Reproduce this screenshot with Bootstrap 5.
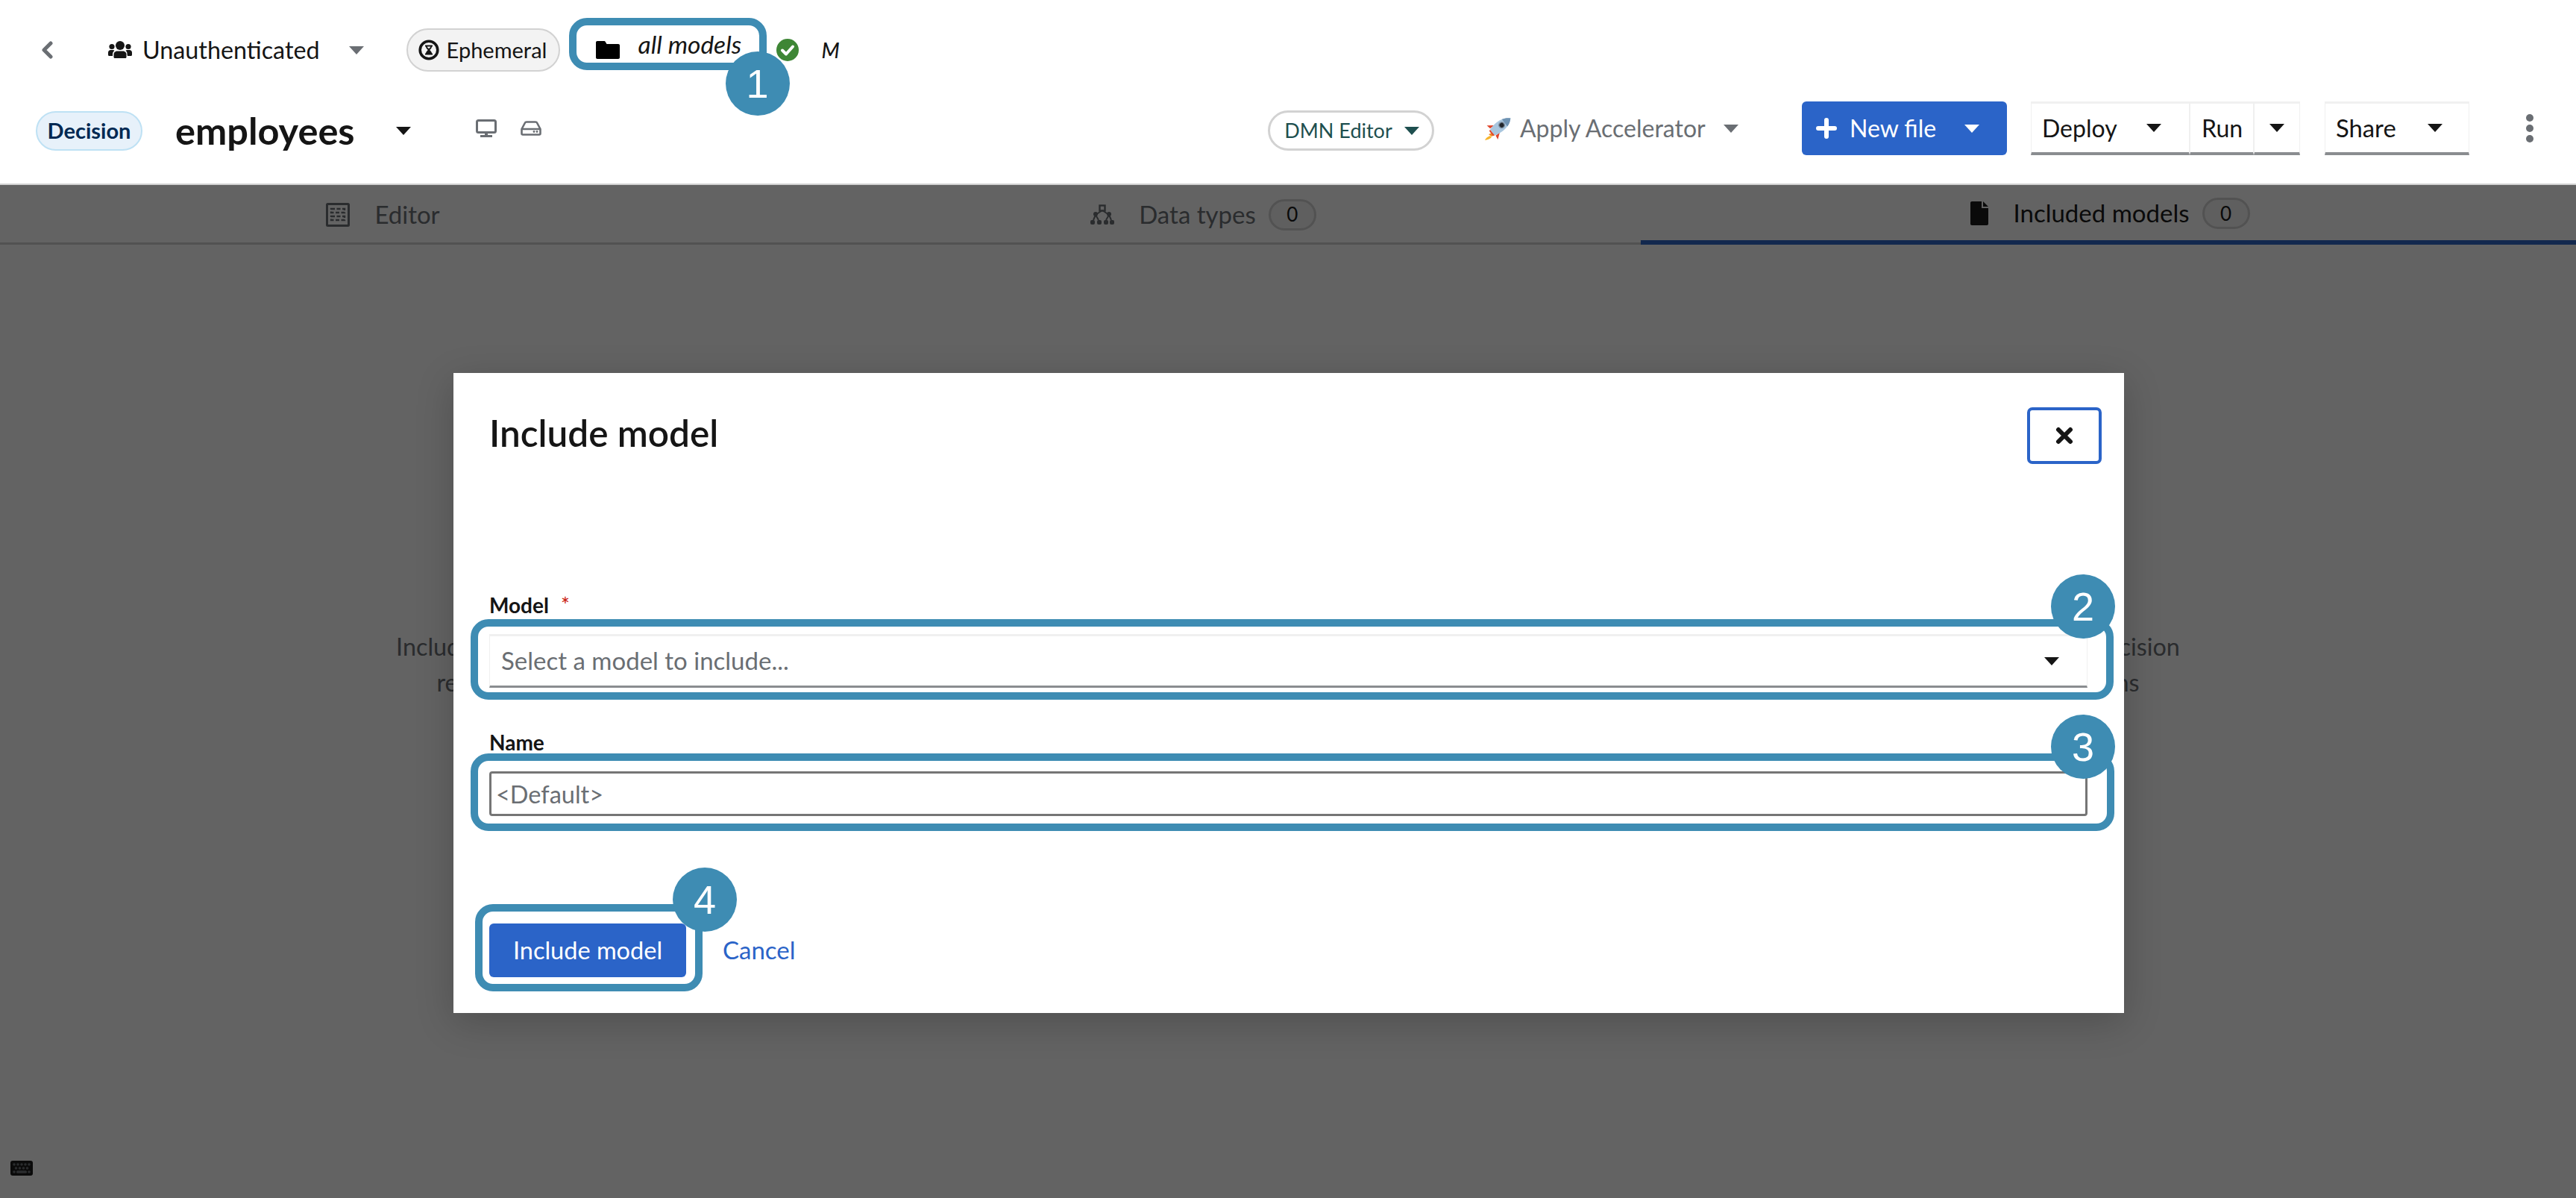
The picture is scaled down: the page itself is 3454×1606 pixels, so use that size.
<!DOCTYPE html>
<html lang="en">
<head>
<meta charset="UTF-8">
<title>employees - Include model</title>
<link href="https://cdn.jsdelivr.net/npm/bootstrap@5.3.0/dist/css/bootstrap.min.css" rel="stylesheet">
<style>
html, body { height: 100%; }
body { font-family: Lato, "Liberation Sans", sans-serif; font-size: 32px; color: #151515; background: #fff; overflow: hidden; }
.page { height: 1606px; }
.head-bar { height: 248px; padding-top: 25px; border-bottom: 2px solid #d2d2d2; }
.row-one { height: 84px; padding-left: 55px; }
.row-two { height: 72px; margin-top: 27px; padding-left: 48px; padding-right: 56px; }
.tri { display: inline-block; width: 0; height: 0; border-left: 10px solid transparent; border-right: 10px solid transparent; border-top: 11px solid currentColor; flex: none; }
.tri-gray { color: #6a6e73; }
.back-arrow { margin-right: 73px; }
.user-name { margin-left: 14px; font-size: 32.3px; }
.user-caret { margin-left: 39px; }
.ephemeral-pill { margin-left: 57px; width: 206px; height: 58px; background: #f3f3f3; border: 2px solid #d2d2d2; font-size: 29px; padding-left: 14px; gap: 10px; }
.models-box { margin-left: 12px; width: 265px; height: 70px; margin-top: -16px; padding-left: 36px; }
.models-folder { margin-top: 16px; flex-shrink: 0; }
.models-name { margin-left: 25px; font-size: 33.500px; font-style: italic; margin-top: 0; white-space: nowrap; }
.saved-check { margin-left: 13px; }
.mod-flag { margin-left: 31px; font-size: 28px; font-style: italic; font-weight: 500; }
.callout-ring { position: absolute; border: 10px solid #3e8cb3; border-radius: 24px; pointer-events: none; }
.step-dot { position: absolute; width: 86px; height: 86px; border-radius: 50%; background: #3e8cb3; color: #fff; font-family: "Liberation Sans", sans-serif; font-size: 54px; line-height: 86px; text-align: center; z-index: 2; }
.ring-one { inset: 0; }
.dot-one { right: -31px; top: 45px; }
.kind-pill { width: 143px; height: 53px; margin-top: 6px; background: #e7f1fa; border: 2px solid #bee1f4; color: #002952; font-size: 29px; font-weight: 700; }
.file-name { margin-left: 44px; margin-top: 6px; font-size: 50.500px; font-weight: 700; line-height: 1; }
.file-caret { margin-left: 55px; margin-top: 6px; color: #151515; }
.screen-icon { margin-left: 87px; }
.drive-icon { margin-left: 32px; }
.editor-pill { width: 223px; height: 54px; margin-top: 6px; border: 3px solid #d2d2d2; color: #1e4f4f; font-size: 27px; gap: 16px; padding-left: 2px; }
.accel-box { margin-left: 67px; color: #6a6e73; font-size: 32px; width: 339px; white-space: nowrap; }
.accel-box .tri { margin-left: 24px; }
.accel-name { margin-left: 10px; }
.new-btn { margin-left: 87px; }
.act-btn { height: 72px; border-radius: 6px; font-size: 32px; --bs-btn-padding-x: 0; --bs-btn-padding-y: 0; }
.new-btn.act-btn { width: 275px; background: #2b64c8; border: 0; color: #fff; justify-content: flex-start; padding-left: 19px; }
.new-btn .tri { margin-left: 38px; }
.new-label { margin-left: 17px; }
.plain-btn { background: #fff; border-style: solid; border-color: #f0f0f0 #f0f0f0 #8a8d90 #f0f0f0; border-width: 3px 1px 4px 1px; border-radius: 0; color: #151515; padding-left: 14px; justify-content: flex-start; }
.deploy-btn { width: 213px; margin-left: 32px; }
.deploy-btn .tri { margin-left: 39px; }
.run-btn { width: 86px; padding-left: 15px; }
.run-caret { width: 62px; justify-content: center; padding-left: 0; }
.share-btn { width: 194px; margin-left: 33px; font-size: 32.800px; }
.share-btn .tri { margin-left: 42px; }
.more-btn { margin-left: 75px; }
.main-zone { height: 1358px; }
.tab-strip { height: 80px; }
.tab-cell { height: 80px; padding-top: 2px; border-bottom: 3px solid #d2d2d2; color: #6a6e73; font-size: 33px; gap: 33px; }
.tab-a { width: 1027px; }
.tab-b { width: 1173px; }
.tab-c { width: 1254px; padding-left: 5px; color: #151515; border-bottom: 6px solid #2b64c8; }
.tab-count { width: 64px; height: 42px; margin-left: -16px; border: 3px solid #d2d2d2; color: #151515; font-size: 26px; background: #f3f3f3; }
.empty-text { padding-top: 515px; line-height: 48px; font-size: 32.350px; color: #6a6e73; white-space: nowrap; text-align: center; }
.keys-icon { position: absolute; left: 14px; bottom: 30px; }
.dim-layer { position: absolute; inset: 0; background: rgba(3,3,3,.62); }
.dialog-box { width: 2240px; height: 858px; margin-top: 252px; margin-left: 2px; background: #fff; box-shadow: 0 12px 48px rgba(3,3,3,.2); padding: 0 49px 48px 48px; }
.dialog-top { height: 290px; padding-top: 46px; margin-right: -19px; }
.dialog-title { font-size: 49.500px; font-weight: 600; line-height: 1; margin: 10px 0 0; }
.close-btn { width: 100px; height: 76px; background: #fff; border: 4px solid #2b64c8; border-radius: 7px; padding: 0; }
.field-label { height: 42px; margin-bottom: 18px; line-height: 42px; font-size: 28px; font-weight: 700; padding: 0; }
.req-mark { color: #c9190b; font-weight: 400; margin-left: 16px; }
.field-wrap { position: relative; }
.model-pick { height: 72px; border-radius: 0; border-style: solid; border-color: #f0f0f0 #f0f0f0 #8a8d90 #f0f0f0; border-width: 3px 1px 3px 1px; color: #6a6e73; font-size: 33px; padding: 0 37px 0 15px; }
.model-pick .tri { color: #151515; }
.ring-two { left: -25px; right: -35px; top: -20px; bottom: -16px; }
.dot-two { right: -37px; top: -80px; }
.name-label { margin-top: 52px; }
.name-input { height: 60px; border: 3px solid #757575; border-radius: 4px; font-family: inherit; font-size: 32.500px; padding: 0 6px; }
.name-input::placeholder { color: #6a6e73; opacity: 1; }
.ring-three { left: -25px; right: -36px; top: -24px; bottom: -20px; }
.dot-three { right: -37px; top: -76px; }
.foot-row { margin-top: 144px; }
.submit-wrap { position: relative; }
.submit-btn { width: 264px; height: 72px; background: #2b64c8; border: 0; border-radius: 6px; font-size: 32.500px; color: #fff; padding: 0; }
.ring-four { left: -19px; right: -22px; top: -26px; bottom: -19px; }
.dot-four { right: -68px; top: -75px; }
.cancel-link { margin-left: 49px; color: #2b64c8; font-size: 33px; text-decoration: none; }
</style>
</head>
<body>
<div class="page d-flex flex-column">
  <header class="head-bar">
    <div class="row-one d-flex align-items-center">
      <svg class="back-arrow" width="17" height="24" viewBox="0 0 17 24"><path d="M13 3 4 12l9 9" fill="none" stroke="#6a6e73" stroke-width="5" stroke-linecap="round" stroke-linejoin="round"/></svg>
      <svg width="32" height="24" viewBox="0 0 32 24" fill="#151515"><circle cx="16" cy="6" r="6"/><circle cx="5" cy="7.500" r="3.600"/><circle cx="27" cy="7.500" r="3.600"/><path d="M9 23c-1 0-1.500-.6-1.500-1.500V18c0-3 2.500-4.500 4.500-4.500h8c2 0 4.500 1.500 4.500 4.500v3.500c0 .9-.5 1.500-1.500 1.500z"/><path d="M6 20H1.500C.6 20 0 19.400 0 18.500V15.500c0-2 1.500-3.500 3.500-3.500h3C7.400 12 8 12.400 8.500 13 6.500 14.200 6 16 6 18zM26 20h4.500c.9 0 1.500-.6 1.500-1.500v-3c0-2-1.500-3.500-3.500-3.500h-3c-.9 0-1.500.4-2 1 2 1.200 2 3 2 5z"/></svg>
      <span class="user-name">Unauthenticated</span>
      <span class="tri tri-gray user-caret"></span>
      <span class="ephemeral-pill d-inline-flex align-items-center rounded-pill">
        <svg width="28" height="28" viewBox="0 0 28 28" class="flex-shrink-0"><circle cx="14" cy="14" r="11.800" fill="none" stroke="#151515" stroke-width="3.600"/><path d="M9 7.500h10v2h-1c0 2-2 3.500-2.800 4.500.8 1 2.800 2.500 2.800 4.500h1v2H9v-2h1c0-2 2-3.500 2.800-4.500-.8-1-2.800-2.500-2.800-4.500H9z" fill="#151515"/><path d="M11.800 9.500h4.400c-.2 1-1.200 1.800-2.200 2.800-1-1-2-1.800-2.200-2.800z" fill="#f3f3f3"/></svg>
        <span>Ephemeral</span>
      </span>
      <div class="models-box position-relative d-flex align-items-center">
        <span class="callout-ring ring-one"></span>
        <svg class="models-folder" width="32" height="24" viewBox="0 0 32 24"><path d="M2 0h9c1 0 1.500.5 2 1.500L14.500 4H30c1.200 0 2 .8 2 2v16c0 1.200-.8 2-2 2H2c-1.200 0-2-.8-2-2V2C0 .8.800 0 2 0z" fill="#000"/></svg>
        <span class="models-name">all models</span>
        <span class="step-dot dot-one">1</span>
      </div>
      <svg class="saved-check" width="30" height="30" viewBox="0 0 30 30"><circle cx="15" cy="15" r="15" fill="#3e8635"/><path d="m8 15.500 5 5 9-10" fill="none" stroke="#fff" stroke-width="4" stroke-linecap="round" stroke-linejoin="round"/></svg>
      <span class="mod-flag">M</span>
    </div>
    <div class="row-two d-flex align-items-center">
      <span class="kind-pill d-inline-flex align-items-center justify-content-center rounded-pill">Decision</span>
      <span class="file-name">employees</span>
      <span class="tri file-caret"></span>
      <svg class="screen-icon" width="28" height="24" viewBox="0 0 28 24"><rect x="1.500" y="1.500" width="25" height="16" rx="2" fill="none" stroke="#6a6e73" stroke-width="3"/><path d="M12 18h4v3h-4zM6 21h16v3H6z" fill="#6a6e73"/></svg>
      <svg class="drive-icon" width="28" height="20" viewBox="0 0 28 20"><path d="M1.500 11 6 2.500C6.300 1.800 7 1.500 8 1.500h12c1 0 1.700.3 2 1L26.500 11v6c0 1-.5 1.500-1.500 1.500H3c-1 0-1.500-.5-1.500-1.500zM1.500 11h25" fill="none" stroke="#6a6e73" stroke-width="2.600"/><circle cx="18" cy="14.500" r="1.400" fill="#6a6e73"/><circle cx="22" cy="14.500" r="1.400" fill="#6a6e73"/></svg>
      <span class="ms-auto editor-pill d-inline-flex align-items-center justify-content-center rounded-pill">DMN Editor<span class="tri"></span></span>
      <span class="accel-box d-inline-flex align-items-center">
        <svg width="38" height="32" viewBox="0 0 38 32" class="flex-shrink-0"><path d="M8 26c-3 1-6 3-7 6 3-.5 7-1.500 9-4z" fill="#f7b52c"/><path d="M10 27 6 24l5-2 3 3z" fill="#f08a24"/><g transform="translate(22 13) rotate(52)"><path d="M-6 6-12 14l6-1zM6 6l6 8-6-1z" fill="#e0452b"/><path d="M0-17C5-12 7-6 7 1c0 5-1 9-2 13H-5C-6 10-7 6-7 1-7-6-5-12 0-17z" fill="#a9c6de"/><path d="M0-17C3-14 5-11 6-7H-6C-5-11-3-14 0-17z" fill="#6f93b3"/><circle cx="0" cy="-2" r="4.500" fill="#7c8ea0"/><circle cx="0" cy="-2" r="3" fill="#22262b"/><path d="M-5 14H5l-1 2H-4z" fill="#e0452b"/></g></svg>
        <span class="accel-name">Apply Accelerator</span><span class="tri"></span>
      </span>
      <button type="button" class="btn new-btn act-btn d-inline-flex align-items-center">
        <svg width="28" height="28" viewBox="0 0 28 28"><path d="M14 3v22M3 14h22" stroke="#fff" stroke-width="6" stroke-linecap="round"/></svg>
        <span class="new-label">New file</span><span class="tri"></span>
      </button>
      <button type="button" class="btn act-btn plain-btn deploy-btn d-inline-flex align-items-center">Deploy<span class="tri"></span></button>
      <button type="button" class="btn act-btn plain-btn run-btn d-inline-flex align-items-center">Run</button>
      <button type="button" class="btn act-btn plain-btn run-caret d-inline-flex align-items-center"><span class="tri"></span></button>
      <button type="button" class="btn act-btn plain-btn share-btn d-inline-flex align-items-center">Share<span class="tri"></span></button>
      <svg class="more-btn" width="12" height="38" viewBox="0 0 12 38" fill="#6a6e73"><circle cx="6" cy="5" r="5"/><circle cx="6" cy="19" r="5"/><circle cx="6" cy="33" r="5"/></svg>
    </div>
  </header>

  <main class="main-zone position-relative">
    <div class="tab-strip d-flex">
      <div class="tab-cell tab-a d-flex align-items-center justify-content-center">
        <svg width="32" height="32" viewBox="0 0 32 32" fill="none" stroke="#6a6e73"><rect x="1.500" y="1.500" width="29" height="29" stroke-width="3" rx="1"/><path d="M7 8h18v5H7zM7 18h18v5H7z" stroke-width="2.400" stroke-dasharray="5 2.500"/></svg>
        <span>Editor</span>
      </div>
      <div class="tab-cell tab-b d-flex align-items-center justify-content-center">
        <svg width="32" height="28" viewBox="0 0 32 28" fill="#6a6e73"><path d="M16 8 7 14M16 8l9 6M7 14l-3 7M7 14l4 7M25 14l-4 7M25 14l3 7" stroke="#6a6e73" stroke-width="2" fill="none"/><rect x="12.500" y="1.500" width="7" height="7" fill="none" stroke="#6a6e73" stroke-width="2.400"/><circle cx="7" cy="13" r="3"/><circle cx="25" cy="13" r="3"/><rect x="0" y="21" width="6" height="6" rx="2"/><rect x="9" y="21" width="6" height="6" rx="2"/><rect x="18" y="21" width="6" height="6" rx="2"/><rect x="26" y="21" width="6" height="6" rx="2"/></svg>
        <span>Data types</span>
        <span class="tab-count d-inline-flex align-items-center justify-content-center rounded-pill">0</span>
      </div>
      <div class="tab-cell tab-c d-flex align-items-center justify-content-center">
        <svg width="24" height="32" viewBox="0 0 24 32"><path d="M2 0h13v9h9v21c0 1.200-.8 2-2 2H2c-1.200 0-2-.8-2-2V2C0 .8.800 0 2 0zM17 0l7 7h-7z" fill="#151515"/></svg>
        <span>Included models</span>
        <span class="tab-count d-inline-flex align-items-center justify-content-center rounded-pill">0</span>
      </div>
    </div>
    <p class="empty-text mb-0">Included models are externally defined models that have been added to this DMN file. Included DMN models have their decision requirements diagram and their decision<br>requirements diagram components available in this DMN file, and included PMML models can be invoked through DMN Boxed Functions from all of the decisions</p>
    <svg class="keys-icon" width="30" height="20" viewBox="0 0 30 20"><rect width="30" height="20" rx="3" fill="#151515"/><g fill="#6a6e73"><circle cx="5" cy="5" r="1.800"/><circle cx="10" cy="5" r="1.800"/><circle cx="15" cy="5" r="1.800"/><circle cx="20" cy="5" r="1.800"/><circle cx="25" cy="5" r="1.800"/><circle cx="7.500" cy="10" r="1.800"/><circle cx="12.500" cy="10" r="1.800"/><circle cx="17.500" cy="10" r="1.800"/><circle cx="22.500" cy="10" r="1.800"/><circle cx="5" cy="15" r="1.800"/><rect x="8" y="13.200" width="14" height="3.600" rx="1.500"/><circle cx="25" cy="15" r="1.800"/></g></svg>

    <div class="dim-layer d-flex justify-content-center align-items-start">
      <div class="dialog-box">
        <div class="dialog-top d-flex justify-content-between align-items-start">
          <h1 class="dialog-title">Include model</h1>
          <button type="button" class="close-btn d-inline-flex align-items-center justify-content-center" aria-label="Close">
            <svg width="24" height="24" viewBox="0 0 24 24"><path d="m4 4 16 16M20 4 4 20" stroke="#151515" stroke-width="6" stroke-linecap="round"/></svg>
          </button>
        </div>
        <label class="field-label form-label d-block">Model<span class="req-mark">*</span></label>
        <div class="field-wrap">
          <span class="callout-ring ring-two"></span>
          <div class="model-pick d-flex align-items-center justify-content-between">
            <span>Select a model to include...</span><span class="tri"></span>
          </div>
          <span class="step-dot dot-two">2</span>
        </div>
        <label class="field-label name-label form-label d-block">Name</label>
        <div class="field-wrap">
          <span class="callout-ring ring-three"></span>
          <input type="text" class="form-control name-input" placeholder="&lt;Default&gt;">
          <span class="step-dot dot-three">3</span>
        </div>
        <div class="foot-row d-flex align-items-center">
          <div class="submit-wrap">
            <span class="callout-ring ring-four"></span>
            <button type="button" class="btn submit-btn">Include model</button>
            <span class="step-dot dot-four">4</span>
          </div>
          <a class="cancel-link" href="#">Cancel</a>
        </div>
      </div>
    </div>
  </main>
</div>
<script src="https://cdn.jsdelivr.net/npm/bootstrap@5.3.0/dist/js/bootstrap.bundle.min.js"></script>
</body>
</html>
